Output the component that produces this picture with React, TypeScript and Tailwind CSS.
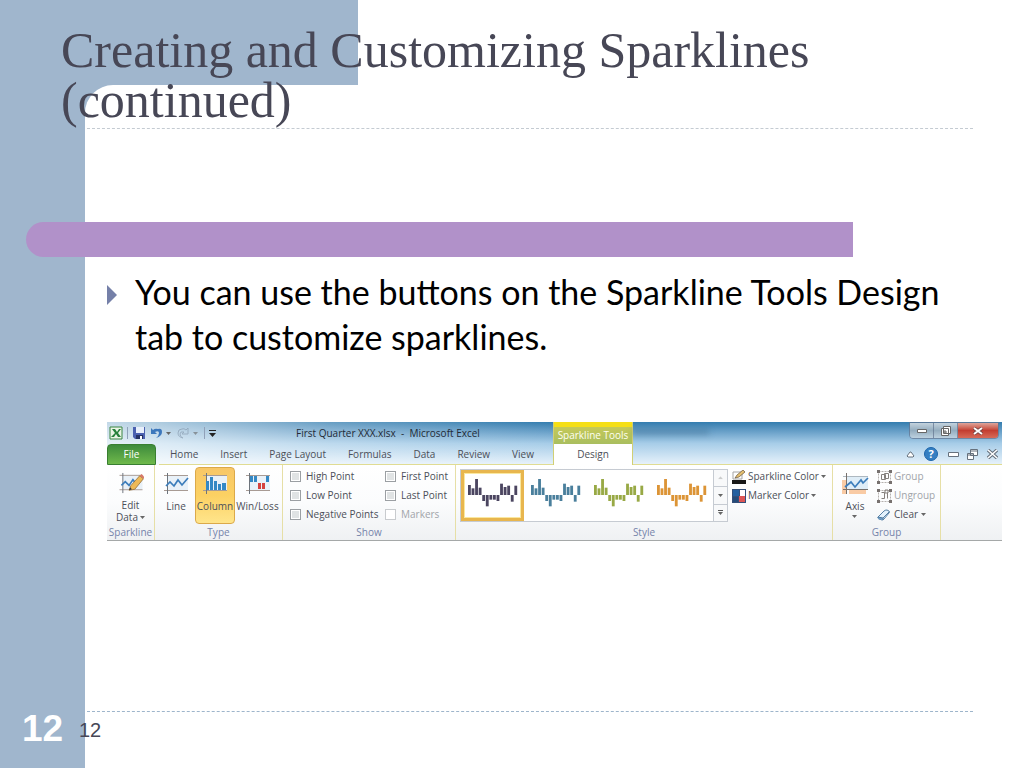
import type { ReactNode } from 'react';

const TABS = ['Home', 'Insert', 'Page Layout', 'Formulas', 'Data', 'Review', 'View'];

const SHOW_OPTIONS = [
  { label: 'High Point', disabled: false },
  { label: 'First Point', disabled: false },
  { label: 'Low Point', disabled: false },
  { label: 'Last Point', disabled: false },
  { label: 'Negative Points', disabled: false },
  { label: 'Markers', disabled: true },
];

const STYLES = [
  { name: 'Dark', color: '#4b4560' },
  { name: 'Blue', color: '#4a7f9c' },
  { name: 'Green', color: '#98a945' },
  { name: 'Orange', color: '#dc9436' },
];

// positive values rise above the axis, negative ones hang below it
const BARS = [30, 20, 48, 22, -18, -34, -14, -14, -18, 34, 24, 28, -20, 28];

function Caret() {
  return (
    <svg viewBox="0 0 5 3" className="h-[3px] w-[5px] shrink-0" fill="#666">
      <path d="M0 0h5L2.5 3z" />
    </svg>
  );
}

function StylePreview({ color }: { color: string }) {
  return (
    <svg viewBox="0 0 150 84" className="h-7 w-[50px]" fill={color}>
      {BARS.map((value, index) => (
        <rect
          key={index}
          x={index * 10.7}
          y={value > 0 ? 48 - value : 48}
          width="8.5"
          height={Math.abs(value)}
        />
      ))}
    </svg>
  );
}

function ChartFrame({ children }: { children: ReactNode }) {
  return (
    <svg viewBox="0 0 26 24" className="h-6 w-[26px]" fill="none">
      <path d="M4 3h21v15H4z" fill="#e9f1f8" />
      <path d="M1 3.5h24M1 18.5h24" stroke="#a89b94" />
      <path d="M4.5 1v21" stroke="#6d747c" />
      {children}
    </svg>
  );
}

function LineIcon() {
  return (
    <ChartFrame>
      <path d="M3 14l4-4 4 4 4-6 4 5 6-7" stroke="#3c7dbb" strokeWidth="1.7" />
    </ChartFrame>
  );
}

function EditDataIcon() {
  return (
    <ChartFrame>
      <path d="M3 14l4-4 4 4 4-6 4 5 6-7" stroke="#3c7dbb" strokeWidth="1.7" />
      <path d="M11 19l2-5L22 4l4 3-9 11z" fill="#edb956" stroke="#916d37" strokeWidth=".8" />
      <path d="M22 4l2-2 3 3-1 2z" fill="#d97868" />
      <path d="M11 19l1-3 2 2z" fill="#333" />
    </ChartFrame>
  );
}

function ColumnIcon() {
  return (
    <ChartFrame>
      <path d="M4 9h3v9H4zM8 5h3v13H8zM12 9h3v9h-3zM16 12h3v6h-3zM20 11h4v7h-4z" fill="#3488c4" />
    </ChartFrame>
  );
}

function WinLossIcon() {
  return (
    <ChartFrame>
      <path d="M5 4h3v6H5zM9 4h3v6H9zM21 4h3v6h-3z" fill="#3488c4" />
      <path d="M13 11h3v6h-3zM17 11h3v6h-3z" fill="#d5423d" />
    </ChartFrame>
  );
}

function AxisIcon() {
  return (
    <svg viewBox="0 0 27 24" className="h-6 w-[27px]" fill="none">
      <path d="M0 8h4v14H0zM7 18h17v4H7z" fill="#f9cba5" />
      <path d="M4 4h22v13H4z" fill="#dfedf7" />
      <path d="M1 4.5h25" stroke="#aeb8c0" />
      <path d="M1 17.5h25M4.5 1v21" stroke="#77716d" />
      <path d="M3 15l6-5 4 5 6-7 2 3 5-5" stroke="#3c7dbb" strokeWidth="1.7" />
    </svg>
  );
}

function SparklineColorIcon() {
  return (
    <svg viewBox="0 0 14 14" className="size-[14px]" fill="none">
      <path d="M1 2h9v7H1z" fill="#fff" stroke="#a5a5a5" />
      <path d="M3 8l2-3 6-5 2 2-6 5z" fill="#e5c070" stroke="#665238" strokeWidth=".7" />
      <path d="M0 10h14v4H0z" fill="#171717" />
    </svg>
  );
}

function MarkerColorIcon() {
  return (
    <svg viewBox="0 0 14 14" className="size-[14px]">
      <path d="M0 0h14v14H0z" fill="#344f79" />
      <path d="M1 1h6v6H1z" fill="#235f9f" />
      <path d="M8 1h5v6H8z" fill="#fff" />
      <path d="M1 8h5v5H1z" fill="#244b79" />
      <path d="M7 7h6v6H7z" fill="#dd5656" />
    </svg>
  );
}

function GroupIcon({ split }: { split?: boolean }) {
  return (
    <svg viewBox="0 0 15 14" className="h-[14px] w-[15px]" fill="none">
      <path d="M1.5 1.5h12v11h-12z" stroke="#b5b1ae" strokeDasharray="2 1" />
      {split ? (
        <path d="M4.5 3.500h3v6h-3M10.500 3.500v6M8 1h3v3H8z" stroke="#85807d" />
      ) : (
        <path d="M4.500 4.500h4v5h-4zM7.500 3.500h4v5h-4z" stroke="#85807d" />
      )}
      <path d="M0 0h3v3H0zM12 0h3v3h-3zM0 11h3v3H0zM12 11h3v3h-3z" fill="#77716f" />
    </svg>
  );
}

function EraserIcon() {
  return (
    <svg viewBox="0 0 14 12" className="h-3 w-[14px]" fill="none" strokeWidth=".9">
      <path d="M1 8l6-6q1-1 3-1l2 1q1 1 0 2l-5 6q-1 1-2 1l-3-1q-2-1-1-2z" fill="#e3f1fc" stroke="#45739b" />
      <path d="M1 8l5 1-1 2-4-1z" fill="#6f9cc4" />
      <path d="M1 8l5 1 6-6M6 9v2" stroke="#45739b" />
    </svg>
  );
}

function QuickAccess() {
  return (
    <div className="flex w-[183px] shrink-0 items-center gap-1 pl-[2px]">
      <svg viewBox="0 0 14 14" className="size-[14px]">
        <path d="M1 1h12v12H1z" fill="#e9f4e5" stroke="#3b8543" />
        <path d="M3 3h3l2 3 2-3h2L9 7l3 4H9L7 8l-2 3H2l4-4z" fill="#26803a" />
      </svg>
      <span className="h-3 w-px bg-slate-400" />
      <button type="button" aria-label="Save">
        <svg viewBox="0 0 14 14" className="size-[14px]">
          <path d="M1 1h12v12H3l-2-2z" fill="#4b61b0" />
          <path d="M4 1h8v6H4z" fill="#e8effb" />
          <path d="M4 9h7v4H4z" fill="#253264" />
          <path d="M8 10h2v3H8z" fill="#fff" />
        </svg>
      </button>
      <button type="button" aria-label="Undo" className="flex items-center gap-1">
        <svg viewBox="0 0 12 12" className="size-3" fill="none">
          <path d="M1 1v6h6L5 5q4-2 4 1t-3 5q6-2 6-6T8 2Q5 1 3 3z" fill="#3c77bc" />
        </svg>
        <Caret />
      </button>
      <button type="button" aria-label="Redo" className="ml-[2px] flex items-center gap-1 opacity-60">
        <svg viewBox="0 0 12 12" className="size-3" fill="none" stroke="#8194a8">
          <path d="M11 1v6H5l2-2Q3 4 3 7t3 4Q1 10 1 6t4-4q2-1 4 1z" />
        </svg>
        <Caret />
      </button>
      <span className="ml-[2px] h-3 w-px bg-slate-400" />
      <button type="button" aria-label="Customize toolbar">
        <svg viewBox="0 0 7 7" className="size-[7px]" fill="#222">
          <path d="M0 0h7v1H0zM0 3h7L3.5 7z" />
        </svg>
      </button>
    </div>
  );
}

function WindowButtons() {
  return (
    <div className="mr-[3px] flex h-[17px] shrink-0 overflow-hidden rounded-b border border-slate-500/70">
      <button type="button" aria-label="Minimize" className="flex w-[24px] items-center justify-center border-r border-slate-500/70 bg-linear-to-b from-[#c3d2dd] via-[#94adbf] to-[#bdd1df]">
        <svg viewBox="0 0 10 4" className="h-1 w-[10px]">
          <path d="M.5 .5h9v3h-9z" fill="#fff" stroke="#666" />
        </svg>
      </button>
      <button type="button" aria-label="Restore" className="flex w-[24px] items-center justify-center border-r border-slate-500/70 bg-linear-to-b from-[#c3d2dd] via-[#94adbf] to-[#bdd1df]">
        <svg viewBox="0 0 10 10" className="size-[10px]" fill="#fff" stroke="#666">
          <path d="M2.500 .5h7v7h-7zM.5 2.500h7v7h-7z" />
          <path d="M3 5h2v2H3z" />
        </svg>
      </button>
      <button type="button" aria-label="Close" className="flex w-[40px] items-center justify-center bg-linear-to-b from-[#dda49b] via-[#c33d31] to-[#d76a58]">
        <svg viewBox="0 0 10 8" className="h-2 w-[10px]">
          <path d="M1 1l8 6M9 1L1 7" stroke="#734444" strokeWidth="3.500" />
          <path d="M1 1l8 6M9 1L1 7" stroke="#fff" strokeWidth="2" />
        </svg>
      </button>
    </div>
  );
}

function WorkbookButtons() {
  return (
    <div className="flex items-center gap-[6px] pr-1">
      <button type="button" aria-label="Collapse ribbon" className="mr-[3px]">
        <svg viewBox="0 0 9 7" className="h-[7px] w-[9px]" fill="#fff" stroke="#66717d">
          <path d="M1 5l3-4h1l3 4-1 1H2z" />
        </svg>
      </button>
      <button type="button" aria-label="Help" className="size-[14px] rounded-full border border-[#1d65ab] bg-[#357fc2] text-[11px] leading-3 font-bold text-white">?</button>
      <button type="button" aria-label="Minimize workbook" className="ml-1">
        <svg viewBox="0 0 11 5" className="h-[5px] w-[11px]" fill="#fff" stroke="#66717d">
          <path d="M.5 .5h10v4H.5z" />
        </svg>
      </button>
      <button type="button" aria-label="Restore workbook" className="ml-[2px]">
        <svg viewBox="0 0 11 11" className="size-[11px]" fill="#fff" stroke="#66717d">
          <path d="M3.500 .5h7v6h-7zM.5 4.500h6v6h-6zM1 6h5M4 2h6" />
        </svg>
      </button>
      <button type="button" aria-label="Close workbook" className="ml-[3px]">
        <svg viewBox="0 0 11 10" className="h-[10px] w-[11px]">
          <path d="M1 1l9 8M10 1L1 9" stroke="#66717d" strokeWidth="3.500" />
          <path d="M1 1l9 8M10 1L1 9" stroke="#fff" strokeWidth="1.500" />
        </svg>
      </button>
    </div>
  );
}

function RibbonGroup({ title, className, children }: { title: string; className: string; children: ReactNode }) {
  return (
    <section className={`flex shrink-0 flex-col border-r border-[#e6dfa6] ${className}`}>
      <div className="flex h-[59px] pt-[2px]">{children}</div>
      <div className="text-center leading-4 text-[#7583aa]">{title}</div>
    </section>
  );
}

function BigButton({ icon, className, children }: { icon: ReactNode; className: string; children: ReactNode }) {
  return (
    <button type="button" className={`flex shrink-0 flex-col items-center rounded-sm border pt-1 leading-3 ${className}`}>
      {icon}
      <span className="mt-1 flex flex-col items-center">{children}</span>
    </button>
  );
}

function Ribbon() {
  return (
    <div className="overflow-hidden border-b border-[#a5a8a8] font-['Open_Sans',sans-serif] text-[10px] text-[#4c4f58]">
      <div className="flex h-[43px] bg-linear-to-b from-[#337daf] via-[#a7cde8] to-[#e9f3fb]">
        <div className="flex w-[446px] shrink-0 flex-col bg-linear-to-r from-white/70 via-white/25 to-transparent">
          <div className="flex h-[22px] items-center">
            <QuickAccess />
            <span className="ml-[6px] whitespace-nowrap text-[#222a35]">First Quarter XXX.xlsx&nbsp; -&nbsp; Microsoft Excel</span>
          </div>
          <div className="flex h-[21px]">
            <button type="button" className="mr-[3px] w-[49px] shrink-0 rounded-t-sm border border-[#397f31] bg-linear-to-b from-[#3d8b3c] to-[#6fb94b] text-white">File</button>
            <nav className="flex flex-1 border-b border-[#e0dc93]">
              {TABS.map((tab) => (
                <button key={tab} type="button" className="px-[11px] whitespace-nowrap">{tab}</button>
              ))}
            </nav>
          </div>
        </div>
        <div className="flex w-[80px] shrink-0 flex-col border-x border-[#d1cf74] bg-white text-center">
          <div className="h-[22px] border-t-[5px] border-[#f5df16] bg-linear-to-b from-[#c5c958] to-[#a9be5f] leading-[17px] whitespace-nowrap text-[#fffff0]">Sparkline Tools</div>
          <button type="button" className="flex-1">Design</button>
        </div>
        <div className="flex min-w-0 flex-1 flex-col border-b border-[#e0dc93]">
          <div className="flex h-[22px] items-start justify-between">
            <span className="mt-2 h-1 w-[76px] bg-[#285674]/40 blur-[3px]" />
            <WindowButtons />
          </div>
          <div className="flex flex-1 items-center justify-end">
            <WorkbookButtons />
          </div>
        </div>
      </div>

      <div className="flex h-[75px] bg-linear-to-b from-white via-[#fbfcfd] to-[#eff1f3]">
        <RibbonGroup title="Sparkline" className="w-[48px]">
          <BigButton icon={<EditDataIcon />} className="w-full border-transparent">
            <span>Edit</span>
            <span className="flex items-center gap-[2px]">Data <Caret /></span>
          </BigButton>
        </RibbonGroup>
        <RibbonGroup title="Type" className="w-[128px]">
          <BigButton icon={<LineIcon />} className="ml-[2px] w-[38px] border-transparent">Line</BigButton>
          <BigButton icon={<ColumnIcon />} className="w-[40px] border-[#dba94a] bg-linear-to-b from-[#f8c767] via-[#fcd163] to-[#ffe58b]">Column</BigButton>
          <BigButton icon={<WinLossIcon />} className="w-[45px] border-transparent">Win/Loss</BigButton>
        </RibbonGroup>
        <RibbonGroup title="Show" className="w-[173px]">
          <div className="grid w-full grid-cols-[95px_1fr] pl-[7px]">
            {SHOW_OPTIONS.map(({ label, disabled }) => (
              <label key={label} className={`flex h-[19px] items-center gap-[5px] whitespace-nowrap ${disabled ? 'text-[#a1a4a9]' : ''}`}>
                <input
                  type="checkbox"
                  disabled={disabled}
                  className="size-[11px] shrink-0 appearance-none border border-[#9b9fa3] bg-[#e0e3e4] shadow-[inset_0_0_0_1px_#fff] disabled:border-[#c8cbce] disabled:bg-white"
                />
                {label}
              </label>
            ))}
          </div>
        </RibbonGroup>
        <RibbonGroup title="Style" className="w-[377px]">
          <div className="ml-1 mt-[2px] flex h-[53px] w-[268px] shrink-0 border border-[#c6cbd2] bg-white">
            {STYLES.map(({ name, color }, index) => (
              <button
                key={name}
                type="button"
                aria-label={name}
                className={`flex h-[51px] w-[63px] shrink-0 justify-center border-[3px] pt-[6px] ${index === 0 ? 'border-[#e8b64e] shadow-[inset_0_0_0_1px_#fae8a0]' : 'border-transparent'}`}
              >
                <StylePreview color={color} />
              </button>
            ))}
            <div className="flex flex-1 flex-col border-l border-[#c6cbd2] bg-[#f8f9fa]">
              <button type="button" aria-label="Previous styles" className="flex flex-1 rotate-180 items-center justify-center opacity-30"><Caret /></button>
              <button type="button" aria-label="Next styles" className="flex flex-1 items-center justify-center border-y border-[#c6cbd2]"><Caret /></button>
              <button type="button" aria-label="All styles" className="flex flex-1 flex-col items-center justify-center gap-px">
                <span className="h-px w-[5px] bg-[#555]" />
                <Caret />
              </button>
            </div>
          </div>
          <div className="flex flex-col pl-1 whitespace-nowrap">
            <button type="button" className="flex h-[19px] items-center gap-[2px]"><SparklineColorIcon />Sparkline Color <Caret /></button>
            <button type="button" className="flex h-[19px] items-center gap-[2px]"><MarkerColorIcon />Marker Color <Caret /></button>
          </div>
        </RibbonGroup>
        <RibbonGroup title="Group" className="w-[108px]">
          <BigButton icon={<AxisIcon />} className="ml-1 w-[36px] border-transparent">
            <span className="mb-[3px]">Axis</span>
            <Caret />
          </BigButton>
          <div className="flex flex-col pl-1">
            <button type="button" disabled className="flex h-[19px] items-center gap-[2px] text-[#a1a4a9]"><GroupIcon />Group</button>
            <button type="button" disabled className="flex h-[19px] items-center gap-[2px] text-[#a1a4a9]"><GroupIcon split />Ungroup</button>
            <button type="button" className="flex h-[19px] items-center gap-[3px]"><EraserIcon />Clear <Caret /></button>
          </div>
        </RibbonGroup>
      </div>
    </div>
  );
}

export default function App() {
  return (
    <div className="relative isolate flex min-h-screen flex-col overflow-hidden bg-white">
      {/* backdrop: left column and top block, joined by a rounded inner corner */}
      <div className="absolute inset-y-0 left-0 -z-10 w-[358px] bg-[#a0b6cd]">
        <div className="absolute top-[85px] right-0 bottom-0 left-[85px] rounded-tl-[28px] bg-white" />
      </div>

      <header className="pt-[25px] pr-[51px]">
        <h1 className="pb-[3px] pl-[61px] font-['Liberation_Serif',serif] text-[50px] leading-[50px] text-[#474756]">
          Creating and Customizing Sparklines (continued)
        </h1>
        <div className="ml-[87px] border-t border-dashed border-[#c4cbd2]" />
      </header>

      <div className="mt-[93px] mr-[171px] ml-[26px] h-[35px] rounded-l-full bg-[#b191c9]" />

      <main className="pr-[22px] pl-[107px]">
        <ul className="pt-3 pr-6 pb-[63px]">
          <li className="flex items-start">
            <svg viewBox="0 0 10 20" className="mt-4 mr-[18px] h-5 w-[10px] shrink-0" fill="#7580a8">
              <path d="M0 0l10 10L0 20z" />
            </svg>
            <p className="font-['Lato',sans-serif] text-[34px] leading-[45px] text-black">
              You can use the buttons on the Sparkline Tools Design tab to customize sparklines.
            </p>
          </li>
        </ul>
        <Ribbon />
      </main>

      <footer className="mt-auto pr-[51px] font-['Liberation_Sans',sans-serif]">
        <div className="ml-[87px] border-t border-dashed border-[#9eb5cb]" />
        <div className="flex h-[56px] items-start pl-[22px]">
          <span className="w-[57px] text-[37px] leading-[34px] font-bold text-white">12</span>
          <span className="text-[20px] leading-[36px] text-[#474756]">12</span>
        </div>
      </footer>
    </div>
  );
}
